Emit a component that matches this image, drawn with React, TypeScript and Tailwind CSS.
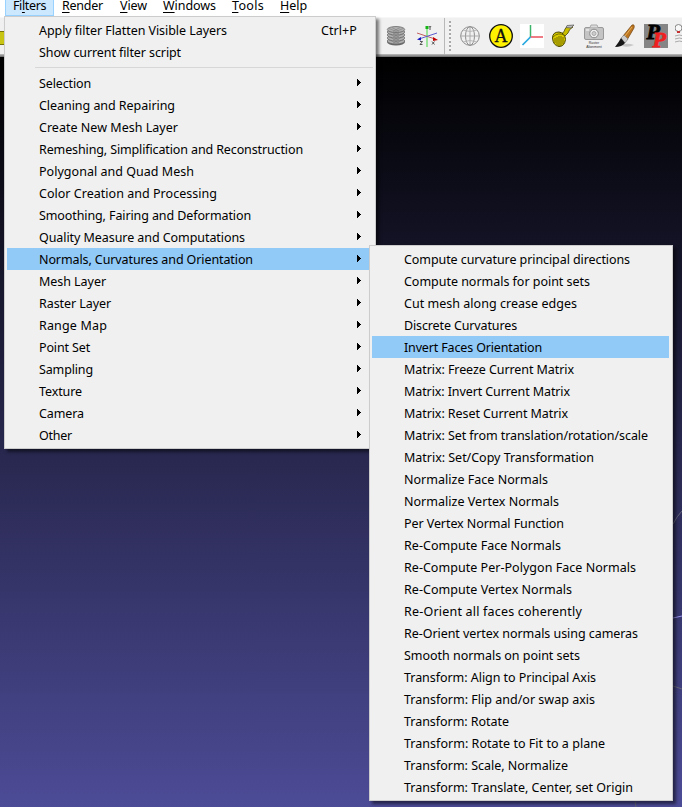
import type { ReactNode } from "react";

type Item = { label: string; width: number };

const filters: Item[] = [
  { label: "Selection", width: 52 },
  { label: "Cleaning and Repairing", width: 136 },
  { label: "Create New Mesh Layer", width: 139 },
  { label: "Remeshing, Simplification and Reconstruction", width: 264 },
  { label: "Polygonal and Quad Mesh", width: 155 },
  { label: "Color Creation and Processing", width: 178 },
  { label: "Smoothing, Fairing and Deformation", width: 212 },
  { label: "Quality Measure and Computations", width: 206 },
  { label: "Normals, Curvatures and Orientation", width: 214 },
  { label: "Mesh Layer", width: 67 },
  { label: "Raster Layer", width: 72 },
  { label: "Range Map", width: 68 },
  { label: "Point Set", width: 51 },
  { label: "Sampling", width: 54 },
  { label: "Texture", width: 43 },
  { label: "Camera", width: 45 },
  { label: "Other", width: 33 },
];

const normals: Item[] = [
  { label: "Compute curvature principal directions", width: 226 },
  { label: "Compute normals for point sets", width: 186 },
  { label: "Cut mesh along crease edges", width: 173 },
  { label: "Discrete Curvatures", width: 113 },
  { label: "Invert Faces Orientation", width: 138 },
  { label: "Matrix: Freeze Current Matrix", width: 170 },
  { label: "Matrix: Invert Current Matrix", width: 166 },
  { label: "Matrix: Reset Current Matrix", width: 164 },
  { label: "Matrix: Set from translation/rotation/scale", width: 244 },
  { label: "Matrix: Set/Copy Transformation", width: 190 },
  { label: "Normalize Face Normals", width: 144 },
  { label: "Normalize Vertex Normals", width: 155 },
  { label: "Per Vertex Normal Function", width: 160 },
  { label: "Re-Compute Face Normals", width: 157 },
  { label: "Re-Compute Per-Polygon Face Normals", width: 232 },
  { label: "Re-Compute Vertex Normals", width: 168 },
  { label: "Re-Orient all faces coherently", width: 178 },
  { label: "Re-Orient vertex normals using cameras", width: 234 },
  { label: "Smooth normals on point sets", width: 176 },
  { label: "Transform: Align to Principal Axis", width: 192 },
  { label: "Transform: Flip and/or swap axis", width: 191 },
  { label: "Transform: Rotate", width: 105 },
  { label: "Transform: Rotate to Fit to a plane", width: 201 },
  { label: "Transform: Scale, Normalize", width: 164 },
  { label: "Transform: Translate, Center, set Origin", width: 229 },
];

let ruler: CanvasRenderingContext2D | null = null;

// Letter spacing that makes a label fill its measured width.
function spacing(label: string, width: number) {
  ruler = ruler ?? document.createElement("canvas").getContext("2d");
  if (!ruler) return 0;
  ruler.font = '12.5px "Noto Sans"';
  return (width - ruler.measureText(label).width) / label.length;
}

function Label({ label, width }: Item) {
  return (
    <span className="whitespace-pre" style={{ letterSpacing: `${spacing(label, width)}px` }}>
      {label}
    </span>
  );
}

function Row({ item, active, arrow, shortcut }: { item: Item; active?: boolean; arrow?: boolean; shortcut?: Item }) {
  return (
    <div className={`flex h-[22px] shrink-0 items-center pl-8 ${active ? "bg-[#91c9f7]" : ""}`}>
      <div className="pt-0.5">
        <Label {...item} />
      </div>
      {shortcut && (
        <div className="mr-4 ml-auto pt-0.5">
          <Label {...shortcut} />
        </div>
      )}
      {arrow && (
        <svg className="mr-3 mb-px ml-auto h-[7px] w-1" viewBox="0 0 4 7" shapeRendering="crispEdges">
          <path d="M0 0h1v1h1v1h1v1h1v1H3v1H2v1H1v1H0Z" />
        </svg>
      )}
    </div>
  );
}

function Icon({ children }: { children: ReactNode }) {
  return (
    <svg className="mr-[7px] size-6 shrink-0" viewBox="0 0 24 24" fill="none">
      {children}
    </svg>
  );
}

function Toolbar() {
  return (
    <div className="flex h-[37px] items-center border-t border-[#f7f7f7] bg-[#f0f0f0]">
      <div className="mt-1 h-[14px] w-1 shrink-0 border-y border-[#77750a] bg-[#c9c515]" />
      <div className="w-[380px] shrink-0" />
      <Icon>
        <ellipse cx="12" cy="18" rx="9" ry="3.5" fill="#666" />
        {[17, 14, 11, 8, 5.5].map((y) => (
          <g key={y}>
            <ellipse cx="12" cy={y} rx="8.7" ry="3" fill="#b0b0b0" stroke="#6c6c6c" strokeWidth=".8" />
            <path d={`M5 ${y - 1}l7 3 7-3M8 ${y - 2}l7 4M16 ${y - 2}l-7 4`} stroke="#777" strokeWidth=".5" />
          </g>
        ))}
      </Icon>
      <Icon>
        <path d="M12 3v20" stroke="#9be29b" strokeWidth="2" />
        <path d="M10.5 2h3v3h-3z" fill="#16b516" />
        <path d="M2 9l18 6" stroke="#c06060" strokeWidth="1" />
        <path d="M22 9L4 15" stroke="#5c5cd0" strokeWidth="1" />
        <path d="m18 13 5 3-5 1Z" fill="#c00000" />
        <path d="m6 13-4 2.500 4 1Z" fill="#1717c0" />
        <path d="m14 2 1 1.500L16 2m-1 1.500V6M5 17.500h2.500L5 20.500h2.500M17 17.500l2.500 3m0-3-2.500 3" stroke="#444" strokeWidth=".9" />
      </Icon>
      <div className="mr-1 -ml-0.5 h-full w-px shrink-0 bg-[#b8b8b8]" />
      <div className="mr-[7px] h-[30px] w-0.5 shrink-0 bg-[repeating-linear-gradient(#a8a8a8_0_2px,#f6f6f6_2px_4px)]" />
      <Icon>
        <g stroke="#8c8c8c">
          <circle cx="12" cy="12" r="9.300" />
          <ellipse cx="12" cy="12" rx="4.500" ry="9.300" />
          <path d="M3 12h18M12 3v18" stroke="#aaa" />
          <path d="M5 6q7 3 14 0M5 18q7-3 14 0" stroke="#b8b8b8" />
        </g>
      </Icon>
      <Icon>
        <circle cx="12" cy="12" r="11.300" fill="#fff200" stroke="#111" strokeWidth="1.300" />
        <text x="12" y="18" textAnchor="middle" fill="#111" stroke="#111" strokeWidth=".3" fontSize="18" fontFamily="Liberation Serif, serif">
          A
        </text>
      </Icon>
      <Icon>
        <path d="M0 0h24v24H0z" fill="#fff" />
        <path d="M10.500 1v12" stroke="#3cb56a" strokeWidth="1.500" />
        <path d="M10.500 13H23" stroke="#ed6570" strokeWidth="1.700" />
        <path d="m10.500 13-8 8" stroke="#28a8e0" strokeWidth="1.700" />
      </Icon>
      <Icon>
        <path d="M10 10q4-2 4-5 1-3 6-3l2 1q-4 2-5 6l-4 4Z" fill="#c9bd00" stroke="#4a4600" strokeWidth=".8" />
        <path d="m16 1.500 7-.5-3 3-5-.5Z" fill="#bbb" stroke="#555" strokeWidth=".7" />
        <path d="M1.500 14q0-6 6.500-6 6 1 6.500 7.500-1 7-6.500 7-6-1-6.500-8.500Z" fill="#d8cb00" stroke="#4a4600" />
        <path d="M2 13q5-5 11-2" stroke="#756d00" />
        <path d="M6 13v8M8 12v10M4 14v5M10 12v10M12 13v7" stroke="#5f5900" strokeWidth=".8" />
      </Icon>
      <Icon>
        <rect x="2.500" y="3.500" width="19" height="12" rx="1.500" fill="#c4c4c4" stroke="#999" />
        <path d="M8 3.500 9 1h6l1 2.500" fill="#ddd" stroke="#aaa" />
        <circle cx="12" cy="9.500" r="4.300" fill="#eee" stroke="#888" />
        <circle cx="12" cy="9.500" r="2" fill="#ccc" stroke="#aaa" />
        <path d="M4 6h3" stroke="#fff" />
        <text x="12" y="19.500" textAnchor="middle" fill="#333" fontSize="3.500" fontFamily="Liberation Sans, sans-serif">
          Raster
        </text>
        <text x="12" y="23.500" textAnchor="middle" fill="#333" fontSize="3.500" fontFamily="Liberation Sans, sans-serif">
          Alignment
        </text>
      </Icon>
      <Icon>
        <path d="M9 22q6 2 12-1-5-2-11-1Z" fill="#c8c8c8" />
        <path d="m10 12 9-11q3-1 2 3l-7 12Z" fill="#bd7620" stroke="#70420d" strokeWidth=".7" />
        <path d="m12 12 7-9" stroke="#e8ae58" />
        <path d="m8 14 3-3 4 4-3 4Z" fill="#ccc" stroke="#777" strokeWidth=".6" />
        <path d="M8 14q-2 4-6 9 7 0 10-4Z" fill="#171717" />
      </Icon>
      <Icon>
        <path d="M0 0h24v24H0z" fill="#858585" />
        <text x="2.500" y="15" fill="#000" stroke="#000" strokeWidth=".8" fontSize="22" fontStyle="italic" fontWeight="bold" fontFamily="Liberation Serif, serif">
          P
        </text>
        <text x="8.500" y="23" fill="#f02020" stroke="#f02020" strokeWidth=".8" fontSize="22" fontStyle="italic" fontWeight="bold" fontFamily="Liberation Serif, serif">
          P
        </text>
      </Icon>
      <Icon>
        <circle cx="3.500" cy="4" r="3.500" fill="#f8f8f8" stroke="#888" />
        <path d="M2 7h3v2H2z" fill="#c63232" />
        <path d="M0 12q4-2 9 0M0 15q4-2 9 0M0 18q4-2 9 0" stroke="#aaa" />
      </Icon>
    </div>
  );
}

const menuBar: (Item & { key: number; cell: string })[] = [
  { label: "Filters", width: 33, key: 2, cell: "ml-[5px] w-[49px] pl-[7px] bg-[#cce8ff] border-x border-b border-[#99d1ff]" },
  { label: "Render", width: 41, key: 0, cell: "w-[58px] pl-2" },
  { label: "View", width: 27, key: 0, cell: "w-[43px] pl-2" },
  { label: "Windows", width: 53, key: 0, cell: "w-[69px] pl-2" },
  { label: "Tools", width: 32, key: 0, cell: "w-12 pl-2" },
  { label: "Help", width: 27, key: 0, cell: "w-11 pl-2" },
];

export default function App() {
  return (
    <div className="relative flex h-[807px] w-[682px] flex-col overflow-hidden bg-white font-['Noto_Sans',sans-serif] text-[12.5px] leading-[20px] text-black">
      <div className="flex h-[17px] shrink-0 leading-3">
        {menuBar.map((m) => (
          <div key={m.label} className={`h-4 ${m.cell}`}>
            <span className="whitespace-pre" style={{ letterSpacing: `${spacing(m.label, m.width)}px` }}>
              {m.label.slice(0, m.key)}
              <span className="underline underline-offset-2">{m.label[m.key]}</span>
              {m.label.slice(m.key + 1)}
            </span>
          </div>
        ))}
      </div>
      <Toolbar />
      <div className="h-[3px] shrink-0 bg-linear-to-b from-[#c0c0c0] to-[#686868]" />
      <div className="min-h-0 flex-1 bg-[linear-gradient(#000,#4c4b96)]">
        <svg className="ml-auto h-full w-[60px]" viewBox="622 57 60 750" fill="none">
          <path d="M673 524q4-8 9-13M673 686l9 3M635 801l1 6" stroke="#66667b" />
          <path d="m673 618 9-2" stroke="#9894ee" />
        </svg>
      </div>

      <div className="absolute top-4 left-1 flex h-[433px] w-[372px] flex-col border border-[#ccc] bg-[#f0f0f0] px-0.5 pt-0.5 shadow-[3px_3px_3px_rgba(0,0,0,0.5)]">
        <Row item={{ label: "Apply filter Flatten Visible Layers", width: 188 }} shortcut={{ label: "Ctrl+P", width: 36 }} />
        <Row item={{ label: "Show current filter script", width: 142 }} />
        <div className="mt-1 mb-1 ml-7 h-px shrink-0 bg-[#d7d7d7]" />
        {filters.map((item) => (
          <Row key={item.label} item={item} arrow active={item.label.startsWith("Normals")} />
        ))}
      </div>

      <div className="absolute top-[245px] left-[369px] flex h-[556px] w-[304px] flex-col border border-[#ccc] bg-[#f0f0f0] py-0.5 pr-[3px] pl-0.5 shadow-[3px_3px_3px_rgba(0,0,0,0.5)]">
        {normals.map((item) => (
          <Row key={item.label} item={item} active={item.label.startsWith("Invert")} />
        ))}
      </div>
    </div>
  );
}
